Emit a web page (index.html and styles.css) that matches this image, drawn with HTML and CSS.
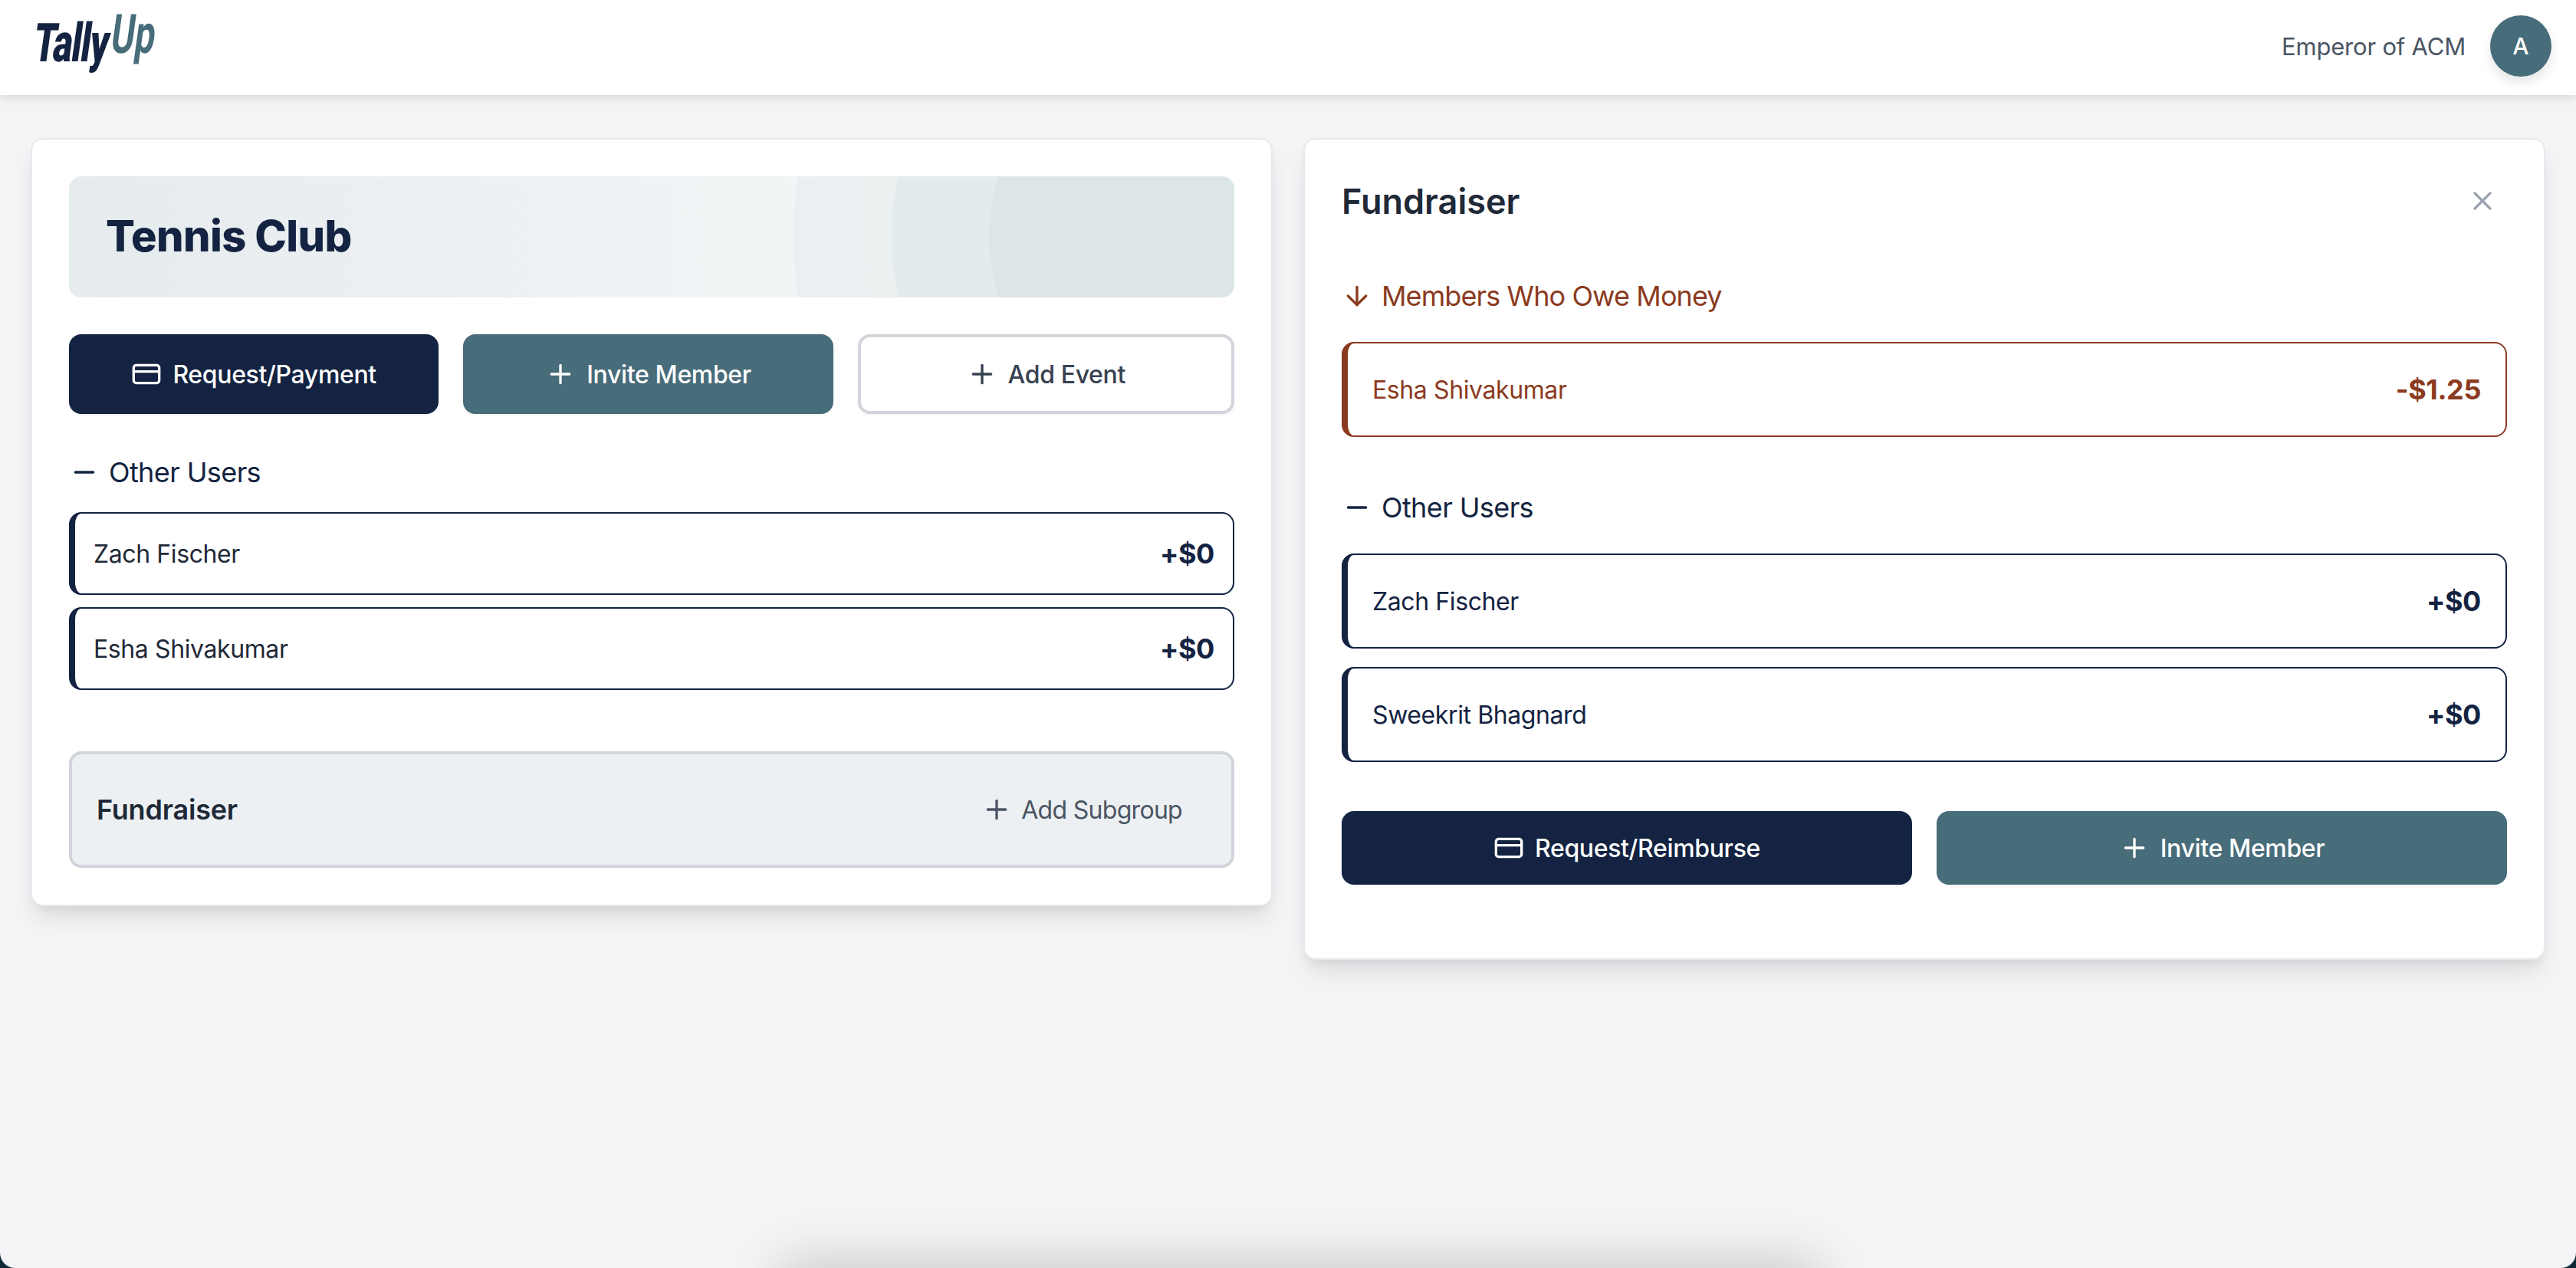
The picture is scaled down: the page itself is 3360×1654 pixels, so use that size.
FILE: index.html
```html
<!DOCTYPE html>
<html lang="en">
<head>
<meta charset="utf-8">
<title>TallyUp</title>
<link rel="stylesheet" href="styles.css">
</head>
<body>
<svg class="sprite" aria-hidden="true">
  <symbol id="i-card" viewBox="0 0 24 24"><rect x="2" y="5" width="20" height="14" rx="2"/><line x1="2" y1="10" x2="22" y2="10"/></symbol>
  <symbol id="i-plus" viewBox="0 0 24 24"><path d="M5 12h14"/><path d="M12 5v14"/></symbol>
  <symbol id="i-minus" viewBox="0 0 24 24"><path d="M5 12h14"/></symbol>
  <symbol id="i-down" viewBox="0 0 24 24"><path d="M12 5v14"/><path d="M19 12l-7 7-7-7"/></symbol>
  <symbol id="i-x" viewBox="0 0 24 24"><path d="M18 6 6 18"/><path d="M6 6l12 12"/></symbol>
</svg>
<div class="app">
  <header class="topbar">
    <div class="logo"><span class="logo-tally">Tally</span><span class="logo-up">Up</span></div>
    <div class="account">
      <span class="account-name">Emperor of ACM</span>
      <span class="avatar">A</span>
    </div>
  </header>
  <main class="columns">
    <section class="card">
      <div class="banner">
        <span class="ring ring-lg"></span>
        <span class="ring ring-md"></span>
        <span class="ring ring-sm"></span>
        <h1 class="banner-title">Tennis Club</h1>
      </div>
      <div class="actions-three">
        <button class="btn btn-navy"><svg class="icon"><use href="#i-card"/></svg>Request/Payment</button>
        <button class="btn btn-teal"><svg class="icon"><use href="#i-plus"/></svg>Invite Member</button>
        <button class="btn btn-outline"><svg class="icon"><use href="#i-plus"/></svg>Add Event</button>
      </div>
      <h2 class="section-head head-navy head-left"><svg class="icon"><use href="#i-minus"/></svg>Other Users</h2>
      <ul class="rows rows-compact">
        <li class="row row-compact"><span class="row-name name-gray">Zach Fischer</span><span class="row-amount">+$0</span></li>
        <li class="row row-compact"><span class="row-name name-gray">Esha Shivakumar</span><span class="row-amount">+$0</span></li>
      </ul>
      <div class="subgroup">
        <span class="subgroup-name">Fundraiser</span>
        <button class="subgroup-add"><svg class="icon"><use href="#i-plus"/></svg>Add Subgroup</button>
      </div>
    </section>
    <section class="card">
      <div class="detail-head">
        <h2 class="detail-title">Fundraiser</h2>
        <button class="close" aria-label="Close"><svg class="icon-x"><use href="#i-x"/></svg></button>
      </div>
      <h3 class="section-head head-rust"><svg class="icon"><use href="#i-down"/></svg>Members Who Owe Money</h3>
      <ul class="rows rows-wide">
        <li class="row row-wide row-rust"><span class="row-name">Esha Shivakumar</span><span class="row-amount">-$1.25</span></li>
      </ul>
      <h3 class="section-head head-navy head-gap"><svg class="icon"><use href="#i-minus"/></svg>Other Users</h3>
      <ul class="rows rows-wide">
        <li class="row row-wide"><span class="row-name">Zach Fischer</span><span class="row-amount">+$0</span></li>
        <li class="row row-wide"><span class="row-name">Sweekrit Bhagnard</span><span class="row-amount">+$0</span></li>
      </ul>
      <div class="actions-two">
        <button class="btn btn-navy"><svg class="icon"><use href="#i-card"/></svg>Request/Reimburse</button>
        <button class="btn btn-teal"><svg class="icon"><use href="#i-plus"/></svg>Invite Member</button>
      </div>
    </section>
  </main>
  <div class="dock-shadow"></div>
  <div class="window-corners"></div>
</div>
</body>
</html>
```
FILE: styles.css
```css
* { box-sizing: border-box; }
html, body { margin: 0; padding: 0; }
body {
  width: 3360px;
  height: 1654px;
  overflow: hidden;
  background: #f3f4f6;
  font-family: Inter, "Noto Sans", sans-serif;
  color: #1f2937;
}
h1, h2, h3, ul { margin: 0; padding: 0; }
ul { list-style: none; }
button { font: inherit; border: 0; background: none; cursor: pointer; }
.sprite { display: none; }
.app { position: relative; width: 3360px; height: 1654px; overflow: hidden; }

.icon, .icon-x {
  fill: none;
  stroke: currentColor;
  stroke-width: 2;
  stroke-linecap: round;
  stroke-linejoin: round;
  flex: none;
}
.icon { width: 40px; height: 40px; }
.icon-x { width: 40px; height: 40px; display: block; }

.topbar {
  height: 124px;
  background: #fff;
  box-shadow: 0 4px 12px rgba(0, 0, 0, .12);
  display: flex;
  align-items: center;
  justify-content: space-between;
  padding: 0 32px 4px 48px;
  position: relative;
}
.logo { display: flex; width: 154px; height: 120px; position: relative; font-family: Roboto, sans-serif; font-weight: 700; line-height: 1; }
.logo-tally, .logo-up { position: absolute; transform-origin: 0 100%; white-space: nowrap; }
.logo-tally { left: -8px; top: 21px; font-size: 70px; font-weight: 900; color: #132341; transform: skewX(-8deg) scaleX(.68); letter-spacing: -1.5px; }
.logo-up { left: 93px; top: 9px; font-size: 71px; color: #476c7a; font-weight: 700; transform: skewX(-8deg) scaleX(.66); }
.account { display: flex; align-items: center; gap: 32px; }
.account-name { font-size: 31px; color: #4b5563; letter-spacing: -.2px; }
.avatar {
  width: 80px; height: 80px;
  border-radius: 50%;
  background: #476c7a;
  color: #fff;
  font-size: 30px;
  font-weight: 550;
  display: flex; align-items: center; justify-content: center;
  box-shadow: 0 8px 14px rgba(0, 0, 0, .1);
}

.columns {
  display: flex;
  align-items: flex-start;
  gap: 40px;
  padding: 56px 40px 0;
}
.card {
  flex: 1 1 0;
  background: #fff;
  border: 2px solid #e8e9ec;
  border-radius: 16px;
  padding: 48px;
  box-shadow: 0 20px 30px -6px rgba(0, 0, 0, .1), 0 8px 12px -4px rgba(0, 0, 0, .05);
}

.banner {
  position: relative;
  overflow: hidden;
  height: 158px;
  border-radius: 16px;
  background: linear-gradient(to right, #e6ebee, #f3f5f6 70%);
  display: flex;
  align-items: center;
  padding: 0 48px 2px;
}
.banner-title { font-size: 56px; font-weight: 760; color: #132341; position: relative; letter-spacing: -.6px; }
.ring { position: absolute; border-radius: 50%; background: rgba(50, 120, 120, .038); top: 50%; transform: translateY(-50%); }
.ring-lg { width: 1024px; height: 1024px; left: 945px; }
.ring-md { width: 768px; height: 768px; left: 1073px; }
.ring-sm { width: 512px; height: 512px; left: 1200px; }

.actions-three { display: grid; grid-template-columns: 482fr 482fr 491fr; gap: 32px; margin-top: 48px; }
.actions-three .btn { height: 104px; }
.actions-two { display: grid; grid-template-columns: 1fr 1fr; gap: 32px; margin: 64px 0 48px; }
.actions-two .btn { height: 96px; }
.btn {
  display: flex; align-items: center; justify-content: center; gap: 14px;
  border-radius: 16px;
  font-size: 32px;
  font-weight: 550;
  letter-spacing: -.35px;
  box-shadow: 0 2px 4px rgba(0, 0, 0, .05);
}
.btn-navy { background: #132341; color: #fff; }
.btn-teal { background: #476c7a; color: #fff; }
.btn-outline { background: #fff; color: #374151; border: 4px solid #d1d5db; }

.section-head {
  display: flex; align-items: center; gap: 12px;
  font-size: 36px; font-weight: 400; line-height: 56px;
  letter-spacing: -.6px;
}
.head-navy { color: #132341; }
.head-rust { color: #8b3a20; margin: 64px 0 32px; letter-spacing: -.9px; }
.head-gap { margin: 64px 0 32px; }
.head-left { margin: 48px 0 24px; }

.rows { display: flex; flex-direction: column; }
.rows-compact { gap: 16px; }
.rows-wide { gap: 24px; }
.row {
  display: flex; align-items: center; justify-content: space-between;
  background: #fff;
  border: 2px solid #132341;
  border-left-width: 8px;
  border-radius: 16px;
  color: #132341;
}
.row-compact { height: 108px; padding: 0 24px; }
.row-wide { height: 124px; padding: 0 32px; }
.row-rust { border-color: #8b3a20; color: #8b3a20; }
.row-name { font-size: 32px; letter-spacing: -.4px; }
.name-gray { color: #1f2937; }
.row-amount { font-size: 36px; font-weight: 650; letter-spacing: -.4px; }

.subgroup {
  display: flex; align-items: center; justify-content: space-between;
  height: 152px;
  margin-top: 80px;
  background: #ecf0f2;
  border: 4px solid #d1d5db;
  border-radius: 16px;
  padding: 0 32px;
}
.subgroup-name { font-size: 36px; font-weight: 620; color: #1f2937; letter-spacing: -.2px; }
.subgroup-add {
  display: flex; align-items: center; gap: 12px;
  padding: 0 32px;
  font-size: 32px;
  letter-spacing: -.7px;
  color: #4b5563;
}

.detail-head { display: flex; align-items: center; justify-content: space-between; height: 64px; }
.detail-title { font-size: 45px; font-weight: 620; color: #1f2937; }
.close { padding: 12px; color: #9ca3af; }

.dock-shadow {
  position: absolute;
  left: 1025px;
  width: 1340px;
  top: 1660px;
  height: 60px;
  box-shadow: 0 -4px 70px 6px rgba(0, 0, 0, .2);
}
.window-corners {
  position: absolute;
  inset: 0;
  border-radius: 0 0 20px 20px;
  box-shadow: 0 0 0 30px #0e2a38;
  pointer-events: none;
}
```
